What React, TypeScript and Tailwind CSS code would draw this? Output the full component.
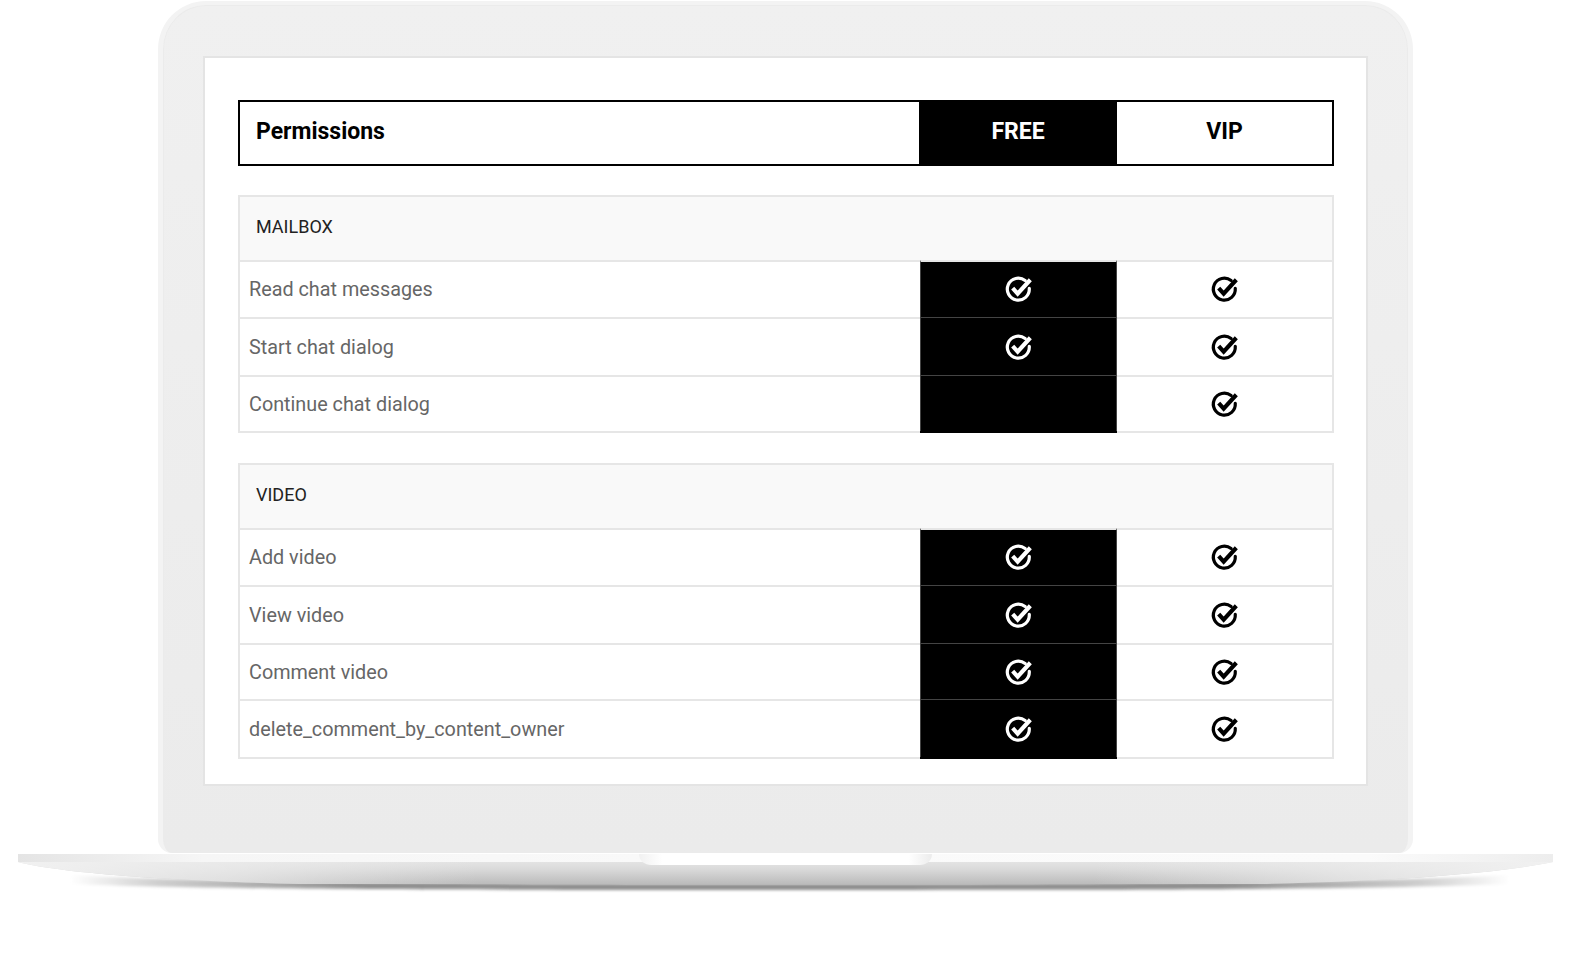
const SECTIONS = [
  {
    title: "MAILBOX",
    rows: [
      { name: "Read chat messages", free: true, h: "h-[57px]" },
      { name: "Start chat dialog", free: true, h: "h-[58px]" },
      { name: "Continue chat dialog", free: false, h: "h-[56px]" },
    ],
  },
  {
    title: "VIDEO",
    rows: [
      { name: "Add video", free: true, h: "h-[57px]" },
      { name: "View video", free: true, h: "h-[58px]" },
      { name: "Comment video", free: true, h: "h-[56px]" },
      { name: "delete_comment_by_content_owner", free: true, h: "h-[58px]" },
    ],
  },
];

function Check() {
  return (
    <svg viewBox="0 0 28 28" className="h-[29px] w-[29px]" fill="none" stroke="currentColor" aria-hidden>
      <path d="M20.4 5.4A10.6 10.6 0 1 0 24.4 13" strokeWidth="3.1" strokeLinecap="round" />
      <path d="M8.4 12.6L13.2 18L25.4 4.6" strokeWidth="4" />
    </svg>
  );
}

function Base() {
  return (
    <svg viewBox="0 0 1577 70" className="block h-[70px] w-[1577px]" aria-hidden>
      <defs>
        <linearGradient id="body" x1="0" y1="0" x2="0" y2="1">
          <stop offset="0" stopColor="#eeeeee" />
          <stop offset="0.5" stopColor="#dadada" />
          <stop offset="1" stopColor="#bbbbbb" />
        </linearGradient>
        <linearGradient id="edge" x1="0" y1="0" x2="1" y2="0">
          <stop offset="0" stopColor="#e4e4e4" />
          <stop offset="0.12" stopColor="#f6f6f6" />
          <stop offset="0.5" stopColor="#fafafa" />
          <stop offset="0.88" stopColor="#fbfbfb" />
          <stop offset="1" stopColor="#ededed" />
        </linearGradient>
        <linearGradient id="fade" x1="0" y1="0" x2="1" y2="0">
          <stop offset="0" stopColor="#f1f1f1" stopOpacity="1" />
          <stop offset="0.14" stopColor="#ececec" stopOpacity="0.7" />
          <stop offset="0.3" stopColor="#ececec" stopOpacity="0" />
          <stop offset="0.7" stopColor="#ececec" stopOpacity="0" />
          <stop offset="0.86" stopColor="#ececec" stopOpacity="0.7" />
          <stop offset="1" stopColor="#f1f1f1" stopOpacity="1" />
        </linearGradient>
        <linearGradient id="notch" x1="0" y1="0" x2="1" y2="0">
          <stop offset="0" stopColor="#f1f1f1" />
          <stop offset="0.08" stopColor="#ffffff" />
          <stop offset="0.92" stopColor="#ffffff" />
          <stop offset="1" stopColor="#ececec" />
        </linearGradient>
        <linearGradient id="shade" x1="0" y1="0" x2="1" y2="0">
          <stop offset="0" stopColor="#ffffff" />
          <stop offset="0.06" stopColor="#cfcfcf" />
          <stop offset="0.2" stopColor="#8e8e8e" />
          <stop offset="0.8" stopColor="#8e8e8e" />
          <stop offset="0.94" stopColor="#cfcfcf" />
          <stop offset="1" stopColor="#ffffff" />
        </linearGradient>
        <filter id="soft" x="-5%" y="-200%" width="110%" height="500%">
          <feGaussianBlur stdDeviation="1.6" />
        </filter>
      </defs>
      {/* shadow under the base */}
      <path d="M70 22C200 29 400 31 788 31C1180 31 1380 29 1510 22V31C1380 36 1180 37 788 37C400 37 200 36 70 31Z" fill="url(#shade)" filter="url(#soft)" />
      <path d="M18 1H1553V9C1500 20 1400 28 1260 31H300C170 28 60 20 18 9Z" fill="url(#body)" />
      <path d="M18 1H1553V9C1500 20 1400 28 1260 31H300C170 28 60 20 18 9Z" fill="url(#fade)" />
      <rect x="18" y="1" width="1535" height="8" fill="url(#edge)" />
      <path d="M639 1H932C932 8 926 12 920 12H651C645 12 639 8 639 1Z" fill="url(#notch)" />
    </svg>
  );
}

export default function App() {
  return (
    <div className="h-[970px] w-full overflow-hidden bg-white pt-px font-['Roboto',sans-serif]">
      <div className="ml-[158px] h-[852px] w-[1255px] rounded-t-[48px] rounded-b-[14px] border-x-[5px] border-t-[4px] border-[#f3f3f3] bg-gradient-to-b from-[#f0f0f0] to-[#ebebeb] pt-[51px] pl-[40px] shadow-[inset_0_0_0_1px_#ebebeb]">
        <div className="h-[730px] w-[1165px] border-2 border-[#e4e4e4] bg-white pt-[42px] pl-[33px]">
          <div className="flex h-[66px] w-[1096px] items-stretch border-2 border-black text-[23px] text-black">
            <div className="flex w-[679px] items-center pb-[2px] pl-[16px] font-bold">Permissions</div>
            <div className="flex w-[198px] items-center justify-center bg-black pb-[2px] font-bold text-white">FREE</div>
            <div className="flex flex-1 items-center justify-center pb-[2px] font-bold">VIP</div>
          </div>
          <div className="mt-[29px] flex w-[1096px] flex-col gap-[30px]">
            {SECTIONS.map((s) => (
              <div key={s.title} className="border-x-2 border-t-2 border-[#e6e6e6]">
                <div className="flex h-[63px] items-center bg-[#f9f9f9] pb-[4px] pl-[16px] text-[18px] text-[#222]">{s.title}</div>
                {s.rows.map((r, i) => (
                  <div key={r.name} className={`flex items-stretch ${r.h}`}>
                    <div className="flex w-[680px] items-center border-y-2 border-t-[#e6e6e6] border-b-transparent pt-[3px] pl-[9px] text-[19.8px] text-[#666]">
                      {r.name}
                    </div>
                    <div
                      className={
                        i === 0
                          ? "flex w-[197px] items-center justify-center border-x border-x-[#444] border-t-2 border-t-[#e6e6e6] bg-black pr-px text-white"
                          : "flex w-[197px] items-center justify-center border-x border-x-[#444] border-t border-t-[#444] bg-black pt-px pr-px text-white"
                      }
                    >
                      {r.free && <Check />}
                    </div>
                    <div className="flex flex-1 items-center justify-center border-t-2 border-[#e6e6e6] text-black">
                      <Check />
                    </div>
                  </div>
                ))}
                <div className="flex h-[2px] bg-[#e6e6e6]">
                  <div className="ml-[680px] w-[197px] bg-black" />
                </div>
              </div>
            ))}
          </div>
        </div>
      </div>
      <Base />
    </div>
  );
}
